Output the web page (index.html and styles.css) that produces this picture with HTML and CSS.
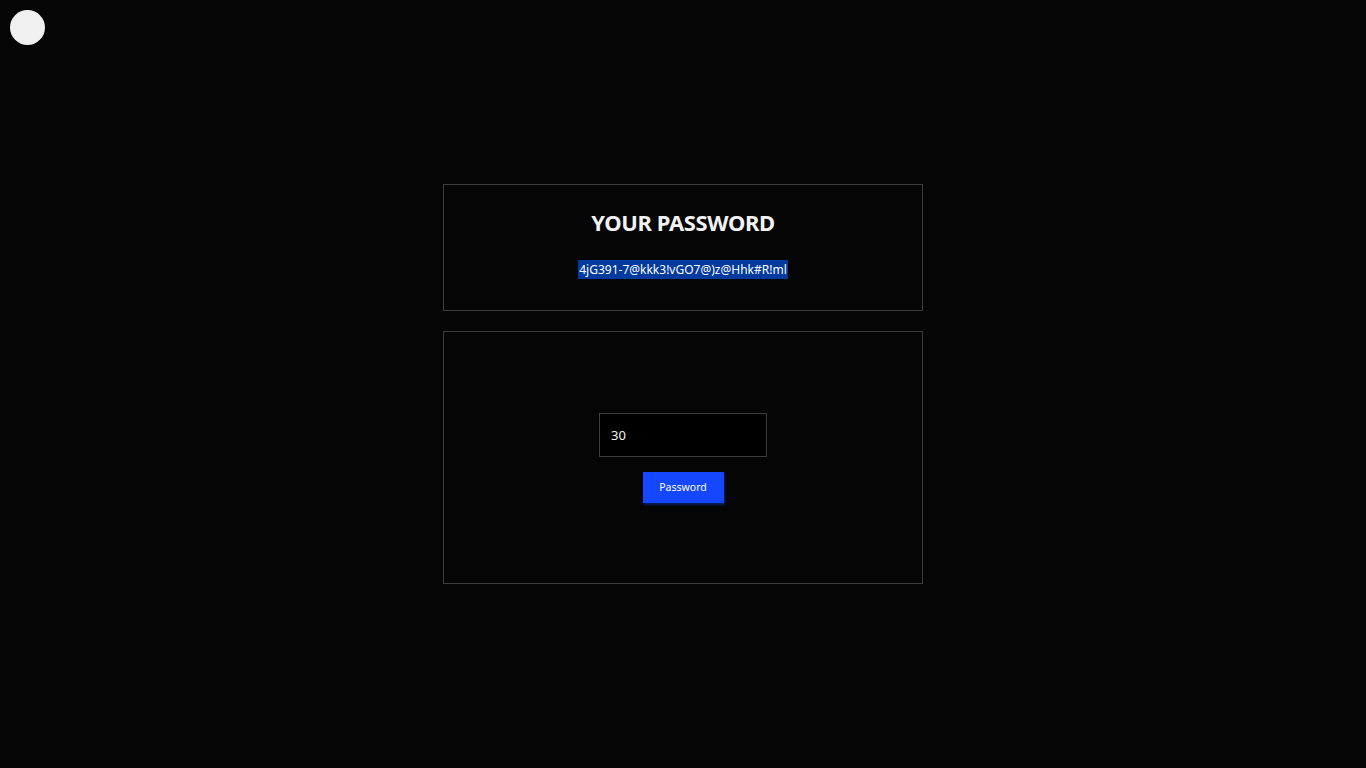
FILE: index.html
```html
<!DOCTYPE html>
<html lang="en">
<head>
<meta charset="utf-8">
<title>Password Generator</title>
<link rel="stylesheet" href="styles.css">
</head>
<body>
<button class="toggle" aria-label="toggle theme"></button>
<main class="wrap">
  <section class="card card-result">
    <h1 class="title">YOUR PASSWORD</h1>
    <p class="result"><span class="sel">4jG391-7@kkk3!vGO7@)z@Hhk#R!ml</span></p>
  </section>
  <section class="card card-form">
    <input class="len" type="text" value="30">
    <button class="gen">Password</button>
  </section>
</main>
</body>
</html>
```
FILE: styles.css
```css
* { box-sizing: border-box; }
html, body { margin: 0; padding: 0; }
body {
  background: #050505;
  color: #f0f0f0;
  font-family: "Noto Sans", "DejaVu Sans", sans-serif;
  min-height: 768px;
}
.toggle {
  position: absolute;
  left: 10px;
  top: 10px;
  width: 35px;
  height: 35px;
  border-radius: 50%;
  border: none;
  background: #f0f0f0;
  padding: 0;
}
.wrap {
  width: 480px;
  margin: 0 auto;
  padding-top: 184px;
  display: flex;
  flex-direction: column;
  gap: 20px;
}
.card {
  border: 1px solid #3c3c3c;
  background: #050505;
}
.card-result {
  height: 127px;
  padding-top: 22px;
  text-align: center;
}
.title {
  margin: 0;
  font-size: 22px;
  line-height: 30px;
  font-weight: 700;
  letter-spacing: -0.4px;
  color: #f2f2f2;
}
.result {
  margin: 23px 0 0;
  font-size: 12px;
  line-height: 19px;
}
.sel {
  background: #003a9e;
  color: #fff;
  display: inline-block;
  padding: 0 1px;
}
.card-form {
  height: 253px;
  display: flex;
  flex-direction: column;
  align-items: center;
  justify-content: center;
  gap: 15px;
}
.len {
  width: 168px;
  height: 44px;
  background: #000;
  border: 1px solid #3c3c3c;
  color: #f0f0f0;
  font-family: inherit;
  font-size: 13px;
  padding: 0 11px;
  outline: none;
}
.gen {
  width: 81px;
  height: 31px;
  border: none;
  background: #1447ff;
  color: #fff;
  font-family: inherit;
  font-size: 10.5px;
  box-shadow: 1px 2px 2px rgba(20, 60, 200, 0.45);
  padding: 0;
}
```
